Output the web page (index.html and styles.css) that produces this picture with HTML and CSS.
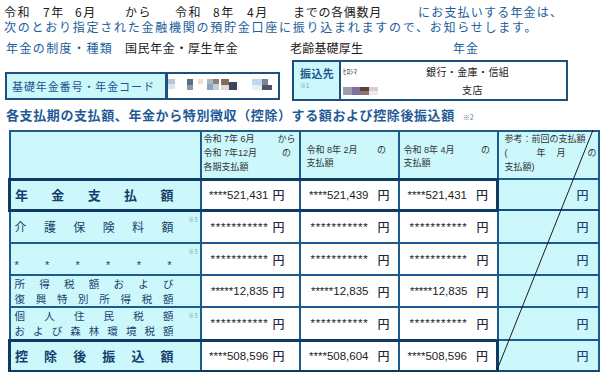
FILE: index.html
```html
<!DOCTYPE html>
<html lang="ja">
<head>
<meta charset="utf-8">
<title>年金振込通知</title>
<link rel="stylesheet" href="styles.css">
</head>
<body>
<main class="page">
  <p class="line l1"><span class="w1">令和</span><span class="w2">7年</span><span class="w3">6月</span><span class="w4">から</span><span class="w5">令和</span><span class="w6">8年</span><span class="w7">4月</span><span class="w8">までの各偶数月</span><span class="w9 blue">にお支払いする年金は、</span></p>
  <p class="line l2 blue">次のとおり指定された金融機関の預貯金口座に振り込まれますので、お知らせします。</p>
  <p class="line l3"><span class="k1 blue">年金の制度・種類</span><span class="k2">国民年金・厚生年金</span><span class="k3">老齢基礎厚生</span><span class="k4 blue">年金</span></p>

  <section class="boxes">
    <div class="box code">
      <div class="code-label">基礎年金番号・年金コード</div>
      <div class="code-val">
        <svg class="mosaic-a" width="110" height="22" viewBox="0 0 110 22">
          <rect x="0" y="5" width="7" height="5" fill="#b8c7d6"/>
          <rect x="0" y="10" width="7" height="5" fill="#dbe3ec"/>
          <rect x="19" y="5" width="6" height="6" fill="#5f6e84"/>
          <rect x="19" y="11" width="6" height="5" fill="#8d9aab"/>
          <rect x="30" y="5" width="5" height="5" fill="#f2dccd"/>
          <rect x="39" y="5" width="6" height="5" fill="#a9b9cc"/>
          <rect x="39" y="10" width="6" height="6" fill="#8ea3bf"/>
          <rect x="45" y="5" width="6" height="5" fill="#8c7f7a"/>
          <rect x="45" y="10" width="6" height="6" fill="#c7cdd6"/>
          <rect x="53" y="5" width="8" height="6" fill="#7c6d63"/>
          <rect x="53" y="11" width="8" height="5" fill="#e0d9d4"/>
          <rect x="61" y="8" width="8" height="8" fill="#3b475c"/>
          <rect x="84" y="5" width="10" height="6" fill="#c2d7ea"/>
          <rect x="84" y="11" width="10" height="5" fill="#e6eef6"/>
          <rect x="94" y="5" width="6" height="6" fill="#7d8597"/>
          <rect x="94" y="11" width="10" height="5" fill="#4c5466"/>
        </svg>
      </div>
    </div>
    <div class="box bank">
      <div class="bank-label"><span class="bl-main">振込先</span><span class="note1">※1</span></div>
      <div class="bank-val">
        <div class="bank-row"><span class="kana">ﾋﾛｼﾏ</span><span class="bank-type">銀行・金庫・信組</span></div>
        <div class="bank-row">
          <svg class="mosaic-b" width="35" height="8" viewBox="0 0 35 8">
            <rect x="0" y="0" width="9" height="8" fill="#a09eae"/>
            <rect x="9" y="0" width="8" height="8" fill="#7d72a0"/>
            <rect x="17" y="0" width="9" height="4" fill="#5a4038"/>
            <rect x="17" y="4" width="9" height="4" fill="#8a7670"/>
            <rect x="26" y="0" width="9" height="4" fill="#d9ccd2"/>
            <rect x="26" y="4" width="9" height="4" fill="#efe8ec"/>
          </svg>
          <span class="branch">支店</span>
        </div>
      </div>
    </div>
  </section>

  <h2 class="heading">各支払期の支払額、年金から特別徴収（控除）する額および控除後振込額<span class="note2">※2</span></h2>

  <div class="tbl-wrap">
    <table class="pay">
      <colgroup>
        <col class="c1"><col class="c2"><col class="c3"><col class="c4"><col class="c5">
      </colgroup>
      <tr class="hdr">
        <td class="cy"></td>
        <td class="cy hcell top hc2">
          <div class="hl"><span>令和 7年 6月</span><span class="hr">から</span></div>
          <div class="hl"><span>令和 7年12月</span><span class="hr">の</span></div>
          <div class="hl"><span>各期支払額</span></div>
        </td>
        <td class="cy hcell mid hc3">
          <div class="hl"><span>令和 8年 2月</span><span class="hr">の</span></div>
          <div class="hl"><span>支払額</span></div>
        </td>
        <td class="cy hcell mid hc4">
          <div class="hl"><span>令和 8年 4月</span><span class="hr">の</span></div>
          <div class="hl"><span>支払額</span></div>
        </td>
        <td class="cy hcell top hc5">
          <div class="hl"><span>参考：前回の支払額</span></div>
          <div class="hl"><span class="q1">(</span><span class="q2">年</span><span class="q3">月</span><span class="q4">の</span></div>
          <div class="hl"><span>支払額)</span></div>
        </td>
      </tr>
      <tr class="r1 thick">
        <td class="cy lab big"><div class="jl"><span>年</span><span>金</span><span>支</span><span>払</span><span>額</span></div></td>
        <td class="amt a2"><div class="amt-in"><span class="num">****521,431</span><span class="yen">円</span></div></td>
        <td class="amt a3"><div class="amt-in"><span class="num">****521,439</span><span class="yen">円</span></div></td>
        <td class="amt a4 tr-edge"><div class="amt-in"><span class="num">****521,431</span><span class="yen">円</span></div></td>
        <td class="cy ref"><div class="amt-in"><span class="yen">円</span></div></td>
      </tr>
      <tr class="r2">
        <td class="cy lab mid-lab"><div class="jl"><span>介</span><span>護</span><span>保</span><span>険</span><span>料</span><span>額</span></div><span class="note3">※3</span></td>
        <td class="amt a2"><div class="amt-in"><span class="num st">***********</span><span class="yen">円</span></div></td>
        <td class="amt a3"><div class="amt-in"><span class="num st">***********</span><span class="yen">円</span></div></td>
        <td class="amt a4"><div class="amt-in"><span class="num st">***********</span><span class="yen">円</span></div></td>
        <td class="cy ref"><div class="amt-in"><span class="yen">円</span></div></td>
      </tr>
      <tr class="r3">
        <td class="cy lab stars"><div class="jl"><span>*</span><span>*</span><span>*</span><span>*</span><span>*</span><span>*</span></div><span class="note3">※3</span></td>
        <td class="amt a2"><div class="amt-in"><span class="num st">***********</span><span class="yen">円</span></div></td>
        <td class="amt a3"><div class="amt-in"><span class="num st">***********</span><span class="yen">円</span></div></td>
        <td class="amt a4"><div class="amt-in"><span class="num st">***********</span><span class="yen">円</span></div></td>
        <td class="cy ref"><div class="amt-in"><span class="yen">円</span></div></td>
      </tr>
      <tr class="r4">
        <td class="cy lab two">
          <div class="jl"><span>所</span><span>得</span><span>税</span><span>額</span><span>お</span><span>よ</span><span>び</span></div>
          <div class="jl"><span>復</span><span>興</span><span>特</span><span>別</span><span>所</span><span>得</span><span>税</span><span>額</span></div>
        </td>
        <td class="amt a2"><div class="amt-in"><span class="num">*****12,835</span><span class="yen">円</span></div></td>
        <td class="amt a3"><div class="amt-in"><span class="num">*****12,835</span><span class="yen">円</span></div></td>
        <td class="amt a4"><div class="amt-in"><span class="num">*****12,835</span><span class="yen">円</span></div></td>
        <td class="cy ref"><div class="amt-in"><span class="yen">円</span></div></td>
      </tr>
      <tr class="r5">
        <td class="cy lab two">
          <div class="jl"><span>個</span><span>人</span><span>住</span><span>民</span><span>税</span><span>額</span></div>
          <div class="jl"><span>お</span><span>よ</span><span>び</span><span>森</span><span>林</span><span>環</span><span>境</span><span>税</span><span>額</span></div>
          <span class="note3">※3</span>
        </td>
        <td class="amt a2"><div class="amt-in"><span class="num st">***********</span><span class="yen">円</span></div></td>
        <td class="amt a3"><div class="amt-in"><span class="num st">***********</span><span class="yen">円</span></div></td>
        <td class="amt a4"><div class="amt-in"><span class="num st">***********</span><span class="yen">円</span></div></td>
        <td class="cy ref"><div class="amt-in"><span class="yen">円</span></div></td>
      </tr>
      <tr class="r6 thick">
        <td class="cy lab big"><div class="jl"><span>控</span><span>除</span><span>後</span><span>振</span><span>込</span><span>額</span></div></td>
        <td class="amt a2"><div class="amt-in"><span class="num">****508,596</span><span class="yen">円</span></div></td>
        <td class="amt a3"><div class="amt-in"><span class="num">****508,604</span><span class="yen">円</span></div></td>
        <td class="amt a4 tr-edge"><div class="amt-in"><span class="num">****508,596</span><span class="yen">円</span></div></td>
        <td class="cy ref"><div class="amt-in"><span class="yen">円</span></div></td>
      </tr>
    </table>
    <svg class="diag" viewBox="0 0 101 240" preserveAspectRatio="none">
      <line x1="97" y1="0" x2="1" y2="240" stroke="#1a1a1a" stroke-width="1"/>
    </svg>
  </div>
</main>
</body>
</html>
```

FILE: styles.css
```css
* { box-sizing: border-box; margin: 0; padding: 0; }

html, body {
  width: 600px;
  height: 372px;
  overflow: hidden;
  background: #ffffff;
}

body {
  font-family: "Liberation Sans", "Noto Sans CJK JP", sans-serif;
  color: #1a1a1a;
}

.page { padding-top: 4px; }

.blue { color: #215d9a; }

.line {
  display: flex;
  font-family: "Noto Sans CJK JP", sans-serif;
  font-size: 12px;
  line-height: 15px;
  letter-spacing: 1.5px;
  white-space: nowrap;
}
.line span { display: block; flex: none; }

.l1 { padding-left: 4px; color: #1a1a1a; }
.w1 { width: 39px; }
.w2 { width: 32px; }
.w3 { width: 50px; }
.w4 { width: 50px; }
.w5 { width: 38px; }
.w6 { width: 34px; }
.w7 { width: 46px; }
.w8 { width: 125px; letter-spacing: 0.7px; }
.w9 { letter-spacing: 1.2px; }

.l2 { padding-left: 4px; letter-spacing: 1.75px; }

.l3 { padding-left: 6px; margin-top: 6px; }
.k1 { width: 119px; letter-spacing: 1.4px; }
.k2 { width: 165px; letter-spacing: 0.6px; }
.k3 { width: 163px; letter-spacing: 0.2px; }
.k4 { letter-spacing: 1px; }

/* boxes */
.boxes {
  display: flex;
  align-items: flex-end;
  gap: 12px;
  margin-top: 5px;
  padding-left: 5px;
}
.box {
  display: flex;
  border: 2px solid #1d5080;
  background: #ffffff;
}
.code { width: 275px; height: 28px; margin-bottom: 1px; }
.code-label {
  width: 162px;
  background: #ccf8fc;
  border-right: 3px solid #1d4f80;
  display: flex;
  align-items: center;
  padding-left: 5px;
  font-family: "Noto Sans CJK JP", sans-serif;
  font-size: 11px;
  letter-spacing: 0.9px;
  color: #21578f;
  white-space: nowrap;
}
.code-val { flex: 1; display: flex; align-items: flex-start; }
.mosaic-a { display: block; }

.bank { width: 276px; height: 41px; }
.bank-label {
  width: 47px;
  background: #ccf8fc;
  border-right: 2px solid #1d5080;
  display: flex;
  flex-direction: column;
  padding: 4px 0 0 6px;
  font-family: "Noto Sans CJK JP", sans-serif;
  color: #21578f;
}
.bl-main { font-size: 11px; font-weight: bold; line-height: 15px; letter-spacing: 0.4px; }
.note1 { font-size: 6px; line-height: 10px; color: #7f93ad; }

.bank-val {
  flex: 1;
  display: grid;
  grid-template-rows: 18px 19px;
  padding-left: 2px;
  font-family: "Noto Sans CJK JP", sans-serif;
  color: #222;
}
.bank-row { display: flex; align-items: center; }
.kana { width: 83px; font-size: 7px; }
.bank-type { font-size: 10px; letter-spacing: 0.4px; }
.mosaic-b { display: block; flex: none; margin-top: 2px; }
.branch { margin-left: 84px; font-size: 10px; letter-spacing: 0.5px; }

/* heading */
.heading {
  margin-top: 6px;
  padding-left: 6px;
  font-family: "Noto Sans CJK JP", sans-serif;
  font-size: 13px;
  font-weight: bold;
  line-height: 16px;
  letter-spacing: 0.6px;
  color: #1f5a96;
  white-space: nowrap;
}
.note2 {
  font-size: 7px;
  font-weight: normal;
  letter-spacing: 0;
  margin-left: 8px;
  color: #5d7fa6;
}

/* table */
.tbl-wrap {
  position: relative;
  margin: 5px 0 0 8px;
  width: 589px;
}
.pay {
  border-collapse: collapse;
  table-layout: fixed;
  width: 589px;
  border: 2px solid #174a78;
}
.c1 { width: 191px; }
.c2 { width: 99px; }
.c3 { width: 99px; }
.c4 { width: 99px; }
.c5 { width: 101px; }

.pay td {
  border: 2px solid #1f5a8e;
  padding: 0;
  background: #ffffff;
  position: relative;
}
.pay td.cy { background: #ccf8fc; }

.hdr td { height: 48px; }
.r1 td { height: 31px; }
.r2 td { height: 33px; }
.r3 td { height: 32px; }
.r4 td { height: 32px; }
.r5 td { height: 33px; }
.r6 td { height: 31px; }

.pay tr.thick td { border-top: 3px solid #0e3a66; border-bottom: 3px solid #0e3a66; }
.pay tr.thick td:first-child { border-left: 3px solid #0e3a66; }
.pay tr.thick td.tr-edge { border-right: 3px solid #0e3a66; }
.pay tr.thick td.ref { border-top: 2px solid #1f5a8e; border-bottom: 2px solid #174a78; }

/* header cells */
.pay .hcell {
  font-family: "Liberation Sans", "Noto Sans CJK JP", sans-serif;
  font-size: 9px;
  line-height: 14px;
  color: #333333;
  white-space: nowrap;
}
.pay .hcell.top { vertical-align: top; }
.pay .hcell.mid { vertical-align: middle; padding-top: 5px; line-height: 13px; }
.hl { display: flex; justify-content: space-between; }
.hr { width: 18px; text-align: center; }
.pay .hc2 { padding-left: 2px; padding-right: 3px; }
.pay .hc3 { padding-left: 6px; padding-right: 7px; }
.pay .hc4 { padding-left: 4px; padding-right: 2px; }
.pay .hc5 { padding-left: 6px; padding-right: 1px; }
.q1 { width: 32px; }
.q2 { width: 20px; }
.q3 { flex: 1; }

/* labels */
.pay .lab {
  font-family: "Noto Sans CJK JP", sans-serif;
  color: #1d416e;
  padding: 0 26px 0 4px;
  vertical-align: middle;
  white-space: nowrap;
}
.jl { display: flex; justify-content: space-between; }
.pay .lab.big { font-size: 13px; font-weight: bold; color: #143e6b; line-height: 16px; }
.pay .lab.mid-lab { font-size: 12px; line-height: 16px; }
.pay .lab.stars {
  font-family: "Liberation Sans", sans-serif;
  font-size: 11px;
  line-height: 12px;
  vertical-align: bottom;
  padding-bottom: 3px;
  padding-right: 28px;
}
.pay .lab.two { font-size: 10.5px; line-height: 15px; }
.note3 {
  position: absolute;
  top: 4px;
  right: 2px;
  font-size: 6px;
  line-height: 7px;
  color: #7f93ad;
  font-family: "Noto Sans CJK JP", sans-serif;
  font-weight: normal;
}

/* amounts */
.pay .amt { vertical-align: middle; }
.amt-in {
  display: flex;
  justify-content: flex-end;
  align-items: center;
  white-space: nowrap;
}
.num {
  font-family: "Liberation Sans", sans-serif;
  font-size: 11.5px;
  color: #222222;
}
.num.st { letter-spacing: 0.8px; }
.yen {
  font-family: "Noto Sans CJK JP", sans-serif;
  font-size: 12px;
  color: #1e2a3a;
  font-weight: 500;
}
.a2 .amt-in { padding-right: 14px; gap: 4px; }
.a3 .amt-in, .a4 .amt-in { padding-right: 8px; gap: 9px; }
.pay .ref { vertical-align: middle; }
.ref .amt-in { padding-right: 9px; }
.ref .yen { color: #1d416e; }

.diag {
  position: absolute;
  top: 0;
  right: 0;
  width: 101px;
  height: 240px;
  pointer-events: none;
}
```
